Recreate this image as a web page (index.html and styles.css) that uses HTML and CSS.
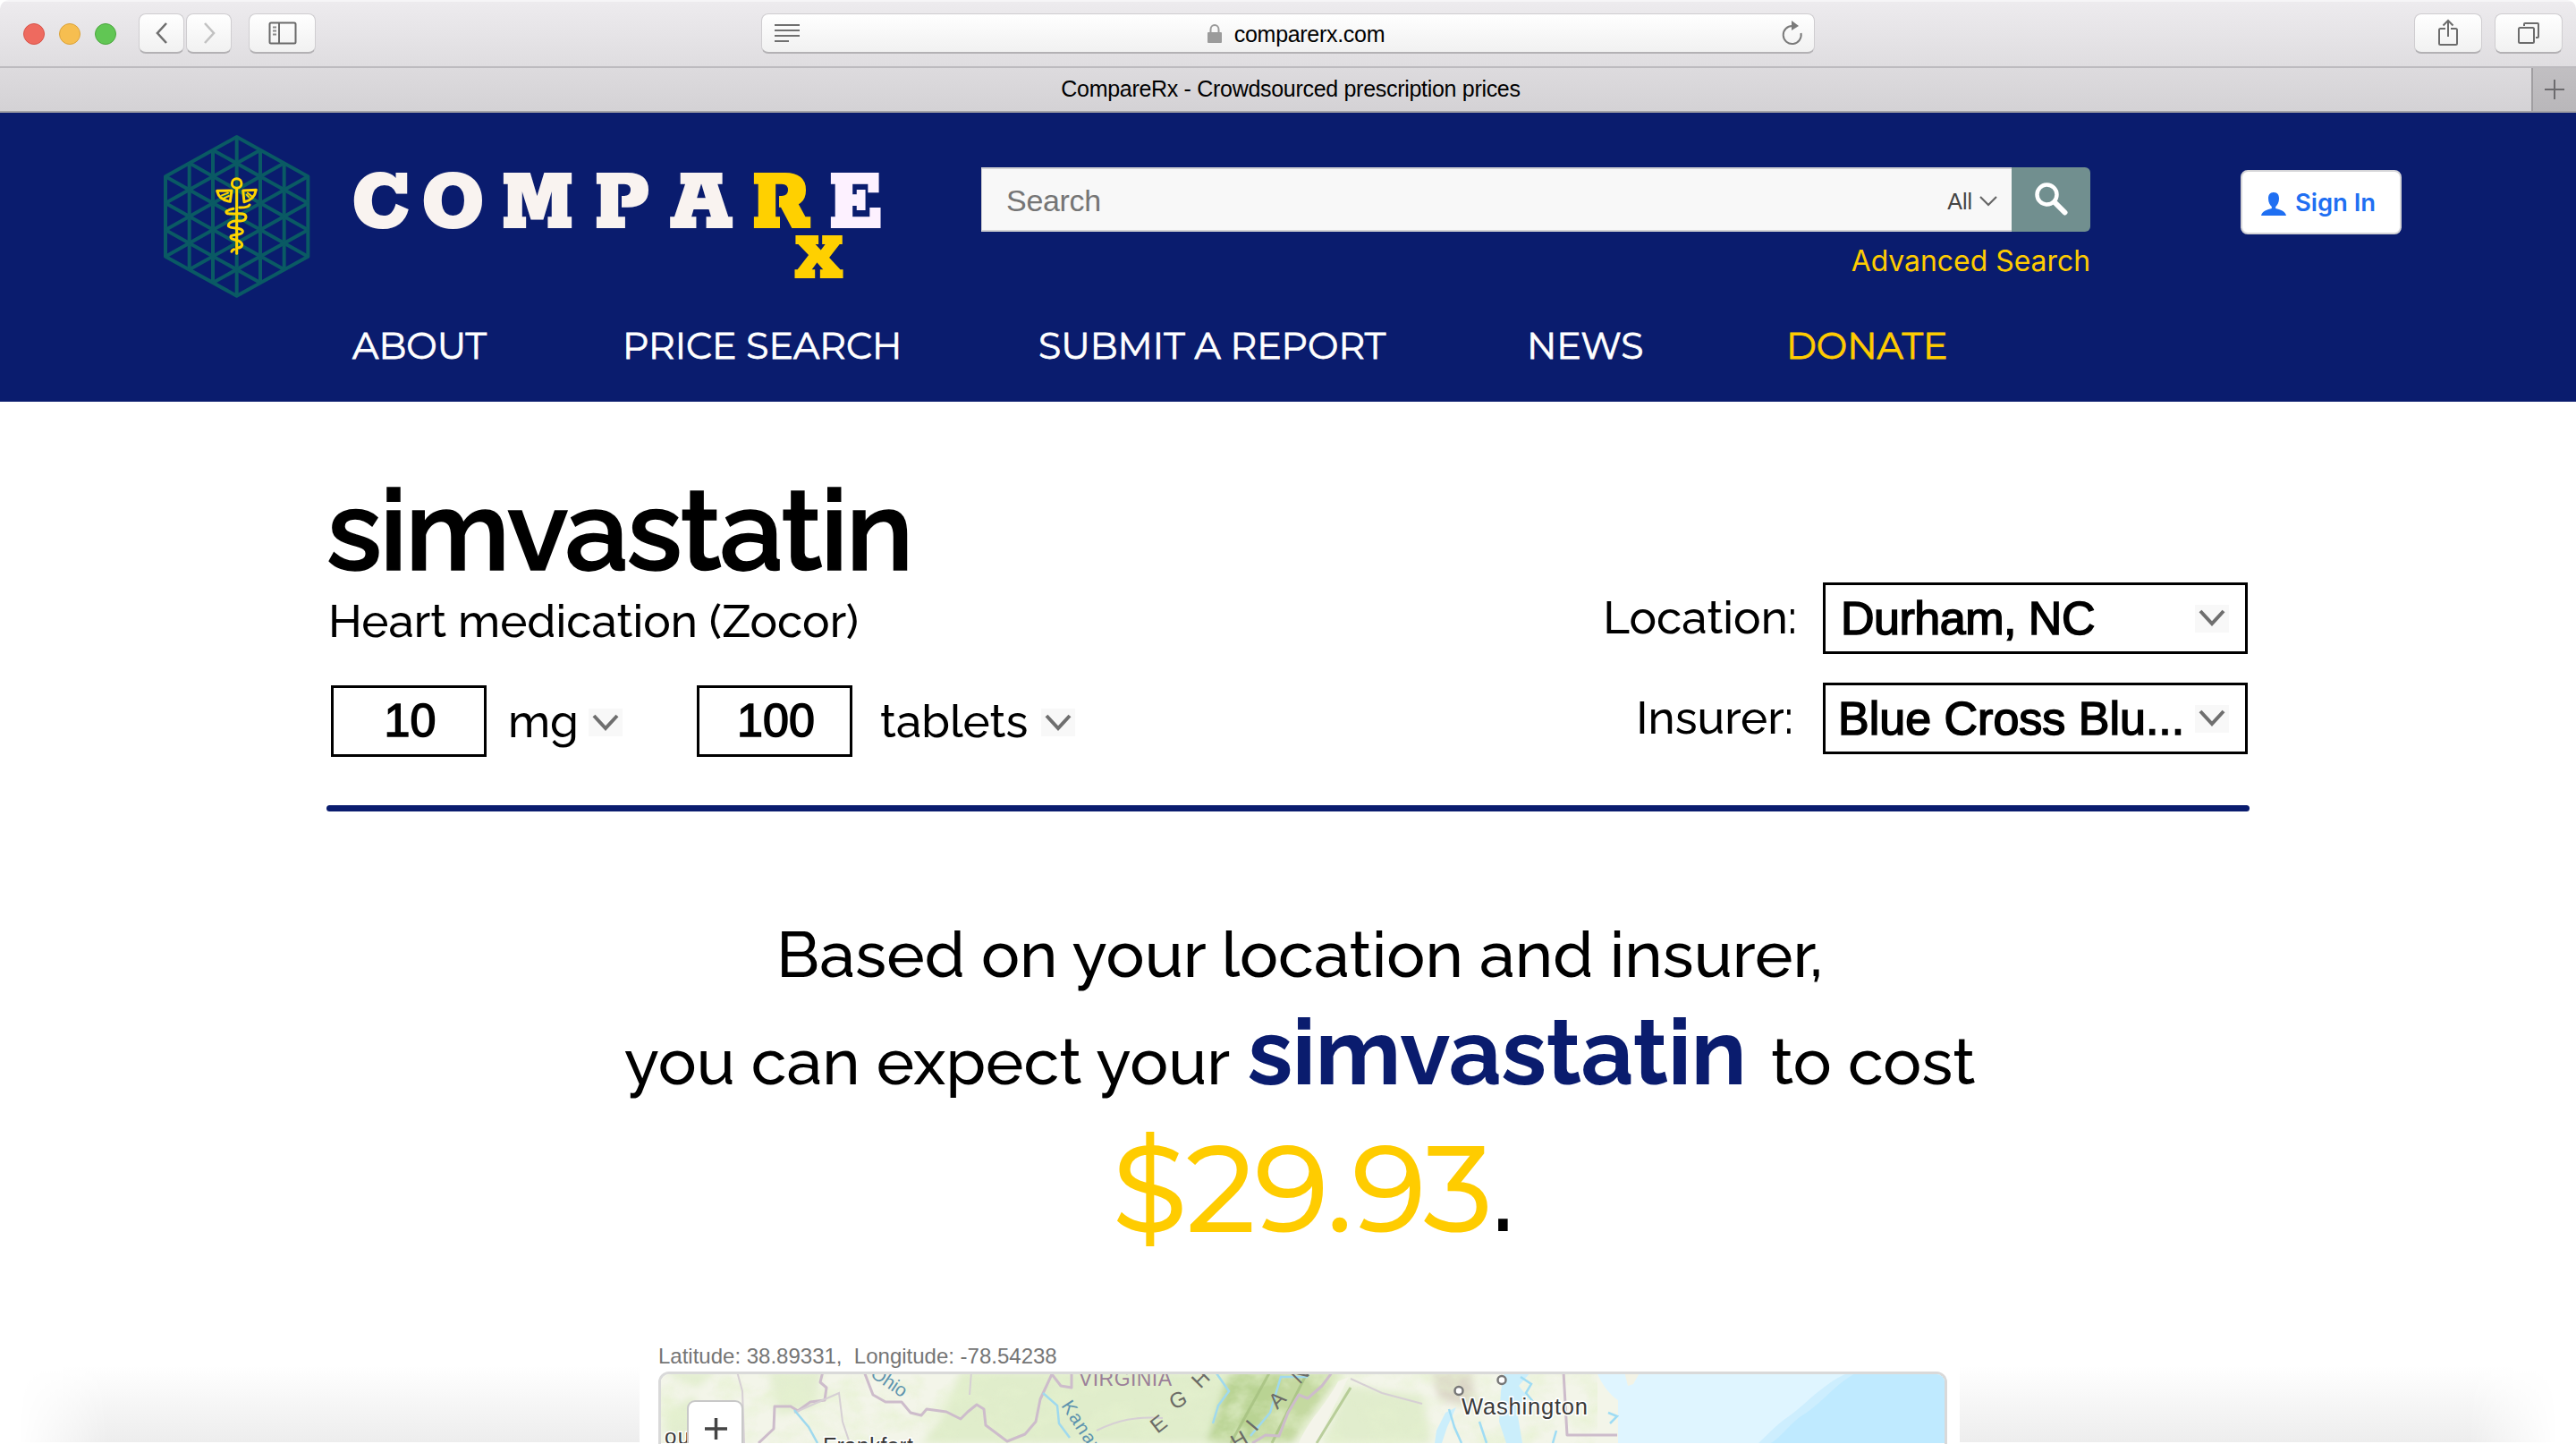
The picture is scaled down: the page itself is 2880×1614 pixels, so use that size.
FILE: index.html
```html
<!DOCTYPE html>
<html lang="en">
<head>
<meta charset="utf-8">
<title>CompareRx - Crowdsourced prescription prices</title>
<link rel="stylesheet" href="styles.css">
</head>
<body>
<div class="window">
  <div class="toolbar">
    <div class="lights"><i class="light red"></i><i class="light yellow"></i><i class="light green"></i></div>
    <div class="history">
      <button class="tool"><svg width="20" height="26" viewBox="0 0 20 26"><path d="M15 2L5 13L15 24" fill="none" stroke="#6f6f6f" stroke-width="2.6"/></svg></button>
      <button class="tool"><svg width="20" height="26" viewBox="0 0 20 26"><path d="M5 2L15 13L5 24" fill="none" stroke="#c2c2c2" stroke-width="2.6"/></svg></button>
    </div>
    <button class="tool sidebar"><svg width="32" height="26" viewBox="0 0 32 26"><g fill="none" stroke="#6a6a6a" stroke-width="2"><rect x="1.500" y="1.500" width="29" height="23" rx="1.500"/><path d="M12 1v24"/></g><path d="M5 6.500h4M5 10.500h4M5 14.500h4" stroke="#8a8a8a" stroke-width="2"/></svg></button>
    <div class="address">
      <svg width="30" height="22" viewBox="0 0 30 22"><path d="M0 2h28M0 8h28M0 14h28M0 20h16" stroke="#707070" stroke-width="2"/></svg>
      <div class="domain">
        <svg width="18" height="22" viewBox="0 0 18 22"><path d="M4.500 10V6a4.500 5 0 0 1 9 0v4" fill="none" stroke="#9b9b9b" stroke-width="2"/><rect x="1" y="9" width="16" height="12" rx="1" fill="#9b9b9b"/></svg>
        <span>comparerx.com</span>
      </div>
      <svg width="26" height="28" viewBox="0 0 26 28"><path d="M13 6A10 10 0 1 0 22.500 14" fill="none" stroke="#7a7a7a" stroke-width="2"/><path d="M12 0l8 6-8 5z" fill="#7a7a7a"/></svg>
    </div>
    <button class="tool wide share"><svg width="24" height="32" viewBox="0 0 24 32"><path d="M9 11H3.500Q2 11 2 12.500V27.500Q2 29 3.500 29H20.500Q22 29 22 27.500V12.500Q22 11 20.500 11H15M12 20V2M6.500 7.500L12 2L17.500 7.500" fill="none" stroke="#6c6c6c" stroke-width="2"/></svg></button>
    <button class="tool wide"><svg width="26" height="26" viewBox="0 0 26 26"><g fill="none" stroke="#6c6c6c" stroke-width="2"><rect x="2" y="7" width="17" height="17" rx="1.500"/><path d="M8 5V3Q8 2 9 2H23Q24 2 24 3V17Q24 18 23 18H21"/></g></svg></button>
  </div>
  <div class="tabbar">
    <div class="tab">CompareRx - Crowdsourced prescription prices</div>
    <div class="newtab"><svg width="22" height="22" viewBox="0 0 22 22"><path d="M11 0v22M0 11h22" stroke="#6c6b6e" stroke-width="2"/></svg></div>
  </div>

  <header class="header">
    <svg class="emblem" width="180" height="195" viewBox="0 0 540 585">
      <g fill="none" stroke="#0a5a64" stroke-width="12" stroke-linejoin="round">
        <path d="M269 24L508 157V425L269 557L30 425V157Z"/>
        <path d="M110 112V469M189 68V513M269 24V557M348 68V513M428 112V469"/>
        <path d="M30 336L348 513M30 246L428 469M30 157L508 425M110 112L508 336M189 68L508 246"/>
        <path d="M508 336L189 513M508 246L110 469M508 157L30 425M428 112L30 336M348 68L30 246"/>
      </g>
      <g fill="none" stroke="#ffd500" stroke-width="9" stroke-linecap="round" stroke-linejoin="round">
        <circle cx="269" cy="180" r="16"/>
        <path d="M269 198V415"/>
        <path d="M252 204L203 205Q210 236 247 241Z"/>
        <path d="M290 204L334 202Q328 236 294 242Z"/>
        <path d="M219 220L240 212M226 230L243 222M302 218L310 226M306 212L318 222" stroke-width="6"/>
        <path d="M278 261Q306 262 312 252M258 265Q226 272 236 280C252 288 298 272 300 292C300 312 270 304 269 305C250 304 238 318 242 324C252 334 290 326 289 342C286 356 262 348 250 356C244 368 264 368 278 374C294 384 286 396 272 396M252 409Q254 402 260 401"/>
      </g>
    </svg>
    <div class="masthead">
      <div class="top-row">
        <svg class="wordmark" width="702" height="130" viewBox="395 187 702 130">
          <g transform="matrix(1 0 0 1.1 0 -25.5)">
            <text class="brand" y="255" x="393 471 560 664 749">COMPA</text>
            <text class="brand gold" x="840" y="255">R</text>
            <text class="brand pale" x="926" y="255">E</text>
          </g>
          <text class="brand gold small" transform="matrix(1 0 0 1.08 0 -24.9)" x="888" y="311">X</text>
        </svg>
        <div class="search">
          <div class="search-box">
            <div class="search-field">
              <span class="placeholder">Search</span>
              <span class="scope">All</span>
              <svg width="20" height="12" viewBox="0 0 20 12"><path d="M1 1L10 10L19 1" fill="none" stroke="#666" stroke-width="2.200"/></svg>
            </div>
            <button class="search-btn"><svg width="38" height="38" viewBox="0 0 38 38"><circle cx="14.500" cy="13.500" r="11" fill="none" stroke="#fff" stroke-width="4.500"/><path d="M23 22L34.500 33.500" stroke="#fff" stroke-width="6" stroke-linecap="round"/></svg></button>
          </div>
          <a class="advanced">Advanced Search</a>
        </div>
        <button class="signin">
          <svg width="28" height="26" viewBox="0 0 28 26"><path d="M14 0C18.500 0 20 3 20 7C20 11 18 14.500 16.200 16V18C21 19 27 21 28 26H0C1 21 7 19 11.800 18V16C10 14.500 8 11 8 7C8 3 9.500 0 14 0Z" fill="#1f6ff2"/></svg>
          <span>Sign In</span>
        </button>
      </div>
      <nav class="nav"><a>ABOUT</a><a>PRICE SEARCH</a><a>SUBMIT A REPORT</a><a>NEWS</a><a class="donate">DONATE</a></nav>
    </div>
  </header>

  <section class="drug">
    <div class="details">
      <h1>simvastatin</h1>
      <p class="desc">Heart medication (Zocor)</p>
      <div class="dose">
        <span class="qty">10</span><span class="unit mg">mg</span><span class="caret"><svg viewBox="0 0 32 20"><path d="M3 2L16 16L29 2"/></svg></span>
        <span class="qty second">100</span><span class="unit tablets">tablets</span><span class="caret"><svg viewBox="0 0 32 20"><path d="M3 2L16 16L29 2"/></svg></span>
      </div>
    </div>
    <div class="filters">
      <label>Location:</label>
      <div class="select"><span>Durham, NC</span><span class="caret"><svg viewBox="0 0 32 20"><path d="M3 2L16 16L29 2"/></svg></span></div>
      <label class="insurer">Insurer:</label>
      <div class="select insurer-select"><span>Blue Cross Blu...</span><span class="caret"><svg viewBox="0 0 32 20"><path d="M3 2L16 16L29 2"/></svg></span></div>
    </div>
  </section>
  <div class="rule"></div>

  <section class="estimate">
    <p class="line first">Based on your location and insurer,</p>
    <p class="line second"><span>you can expect your</span><strong>simvastatin</strong><span>to cost</span></p>
    <p class="price">$29.93<span>.</span></p>
  </section>

  <section class="location">
    <div class="shade left"></div>
    <div class="map-panel">
      <p class="coords">Latitude: 38.89331,&nbsp; Longitude: -78.54238</p>
      <div class="map">
        <svg width="1441" height="80" viewBox="736 1534 1441 80">
          <defs>
            <filter id="soft" x="-20%" y="-40%" width="140%" height="180%"><feGaussianBlur stdDeviation="4"/></filter>
            <filter id="terrain" x="0" y="0" width="100%" height="100%"><feTurbulence type="fractalNoise" baseFrequency="0.030 0.040" numOctaves="4" seed="8"/><feColorMatrix values="0 0 0 0 .78  0 0 0 0 .88  0 0 0 0 .62  2.600 0 0 0 -1.050"/></filter>
          </defs>
          <rect x="736" y="1534" width="1441" height="80" fill="#f3f5e9"/>
          <g filter="url(#soft)">
            <path d="M1050 1590L1075 1534H1380V1614H1030Z" fill="#e0edcb"/>
            <path d="M1375 1534H1440L1400 1614H1350Z" fill="#b9d393"/>
            <path d="M1440 1534H1500L1445 1614H1400Z" fill="#c4d9a0"/>
            <path d="M1505 1550L1480 1614H1600L1590 1560Z" fill="#e1edcd"/>
            <path d="M1600 1534h45l5 40-40-8z" fill="#dcd6c8"/>
            <path d="M740 1534h60l-20 18zM745 1580l30-20 20 54h-50zM860 1534h60l-10 40-40 10z" fill="#e3eed0"/>
          </g>
          <rect x="736" y="1534" width="1050" height="80" filter="url(#terrain)" opacity=".6"/>
          <path d="M1376 1614L1420 1534M1422 1614L1462 1534M1472 1614L1510 1552" stroke="#a3bd7e" stroke-width="3" fill="none" opacity=".7"/>
          <path d="M1452 1614C1465 1585 1480 1575 1496 1545L1508 1540C1492 1570 1480 1600 1470 1614Z" fill="#f4f4ea"/>
          <g fill="none" stroke="#cdbccb" stroke-width="3" stroke-linejoin="round">
            <path d="M848 1614L865 1598L866 1573H884L892 1578L906 1568L922 1566L924 1552L917 1546L920 1534"/>
            <path d="M966 1534L976 1560L990 1568H1008L1018 1580L1030 1583L1036 1576L1058 1579L1074 1587L1082 1579L1092 1571L1100 1576L1102 1594L1126 1612L1146 1604L1158 1590L1163 1565L1176 1537L1186 1550L1198 1552V1534"/>
            <path d="M1400 1614L1415 1605L1430 1606L1440 1580L1452 1560L1462 1564L1478 1550L1490 1534"/>
            <path d="M1748 1534L1752 1605H1808"/>
          </g>
          <g fill="none" stroke="#d6cfd4" stroke-width="2">
            <path d="M824 1534L830 1556L832 1614M888 1580L938 1558L942 1590L950 1614M1226 1600C1250 1588 1270 1584 1300 1586M1086 1534L1084 1560M1510 1542L1545 1558L1590 1570M1608 1614L1616 1590"/>
          </g>
          <g fill="none" stroke="#9fd9ee" stroke-width="2.500">
            <path d="M888 1577L904 1596L914 1614M1166 1558L1182 1572L1184 1592L1196 1608M1360 1536L1374 1556L1362 1572L1356 1592M1462 1540H1432L1420 1580L1398 1606"/>
          </g>
          <path d="M1785 1534C1790 1548 1800 1560 1809 1566V1614H2177V1534Z" fill="#dff5ff"/>
          <path d="M2070 1534C2040 1545 2020 1570 2000 1584C1985 1594 1975 1606 1966 1614H2177V1534Z" fill="#cdeefe"/>
          <path d="M2078 1534C2050 1548 2038 1570 2012 1585C1998 1596 1992 1606 1980 1614H2177V1534Z" fill="#bfeaff"/>
          <path d="M1816 1534L1820 1550L1826 1548L1834 1534Z" fill="#f3f3e6"/>
          <path d="M1678 1556L1682 1534H1712L1698 1550L1706 1560L1696 1578L1702 1614H1684L1676 1590ZM1606 1600L1616 1580L1628 1574L1618 1596L1612 1614H1604Z" fill="#cbeefb"/>
          <path d="M1700 1540l12 8-6 10 10 12M1620 1576l6 20 8 18M1654 1590l8 24M1798 1580l10 4-8 8M1740 1600l-4 14" fill="none" stroke="#9fdcf4" stroke-width="2.500"/>
          <g class="map-text">
            <text x="1206" y="1549.500" font-size="23" fill="#9b8099" textLength="104">VIRGINIA</text>
            <g fill="#5d93ae">
              <text transform="translate(972 1539) rotate(34)" font-size="21" textLength="44">Ohio</text>
              <text transform="translate(1186 1572) rotate(57)" font-size="21" letter-spacing="1.500">Kanaw</text>
            </g>
            <g fill="#6b6b66" font-size="24">
              <text transform="translate(1294 1604) rotate(-38)">E</text>
              <text transform="translate(1312 1577) rotate(-25)">G</text>
              <text transform="translate(1342 1554) rotate(-45)">H</text>
              <text transform="translate(1382 1622) rotate(-30)">H</text>
              <text transform="translate(1404 1602) rotate(-50)">I</text>
              <text transform="translate(1428 1577) rotate(-45)">A</text>
              <text transform="translate(1453 1549) rotate(-45)">N</text>
            </g>
            <g fill="#3a3a3a" stroke="#fff" stroke-width="3" paint-order="stroke">
              <text x="743" y="1614.500" font-size="24" textLength="28">ou</text>
              <text x="920" y="1626" font-size="25" textLength="101">Frankfort</text>
              <text x="1634" y="1582" font-size="25.500" textLength="141">Washington</text>
            </g>
          </g>
          <g fill="#fff" stroke="#777" stroke-width="2.500"><circle cx="1631" cy="1555.500" r="4.500"/><circle cx="1679" cy="1543.500" r="4.500"/></g>
          <rect x="769" y="1567" width="61" height="60" rx="8" fill="#fff" stroke="#c8c8c8" stroke-width="2"/>
          <path d="M788 1598h25M800.500 1586v24" stroke="#444" stroke-width="3.500"/>
        </svg>
      </div>
    </div>
    <div class="shade right"></div>
  </section>
</div>
</body>
</html>
```
FILE: styles.css
```css
* { box-sizing: border-box; }
body { margin: 0; background: #fff; font-family: "Liberation Sans", sans-serif; color: #000; }
p, h1 { margin: 0; font-weight: 400; white-space: nowrap; }
button { font: inherit; padding: 0; }
svg { display: block; flex: none; }

.window { width: 2880px; height: 1614px; overflow: hidden; border-radius: 10px; display: flex; flex-direction: column; }

.toolbar { height: 76px; flex: none; display: flex; align-items: flex-start; padding: 13px 15px 0 26px; border-top: 2px solid #f6f5f7; border-bottom: 2px solid #bdbbbf; background: linear-gradient(#edebee, #dfdde0); }
.lights { display: flex; gap: 16px; padding-top: 11px; }
.light { width: 24px; height: 24px; border-radius: 50%; border: 1px solid; }
.red { background: #ee6a5f; border-color: #d8544a; }
.yellow { background: #f6be50; border-color: #dba33b; }
.green { background: #61c654; border-color: #4ca73f; }
.history { display: flex; gap: 2px; margin-left: 25px; }
.tool { width: 51px; height: 45px; display: flex; align-items: center; justify-content: center; border: 1px solid #cfcdd0; border-bottom: 2px solid #b3b1b4; border-radius: 8px; background: linear-gradient(#fff, #f1f1f1); }
.sidebar { width: 75px; margin-left: 19px; }
.wide { width: 76px; }
.share { margin-left: auto; margin-right: 14px; }
.address { width: 1178px; height: 45px; margin-left: 498px; padding: 0 11px 0 14px; display: flex; align-items: center; justify-content: space-between; border: 1px solid #cfcdd0; border-bottom: 2px solid #b3b1b4; border-radius: 8px; background: linear-gradient(#fff, #f1f1f1); }
.domain { display: flex; align-items: center; gap: 13px; margin-left: 10px; padding-top: 2px; font-size: 25px; letter-spacing: -0.3px; }

.tabbar { height: 50px; flex: none; display: flex; border-bottom: 2px solid #a3a2a5; background: linear-gradient(#dddbde, #d4d2d5); }
.tab { flex: 1; padding-left: 56px; text-align: center; line-height: 46px; font-size: 25px; letter-spacing: -0.3px; }
.newtab { width: 50px; display: flex; align-items: center; justify-content: center; border-left: 2px solid #a09ea1; background: linear-gradient(#c1bfc2, #b9b7ba); }

.header { height: 323px; flex: none; display: flex; gap: 40px; padding-left: 175px; background: #0a1c6e; color: #fff; }
.emblem { margin-top: 19px; }
.masthead { padding-top: 61px; }
.top-row { height: 174px; display: flex; align-items: flex-start; }
.wordmark { overflow: visible; }
.brand { font: 900 97px Rokkitt, "DejaVu Serif", serif; fill: #f9f3f0; }
.brand.gold { fill: #ffd000; }
.brand.pale { fill: #fdf1ff; }
.brand.small { font-size: 77px; }
.search { width: 1240px; display: flex; flex-direction: column; }
.search-box { display: flex; height: 72px; }
.search-field { flex: 1; display: flex; align-items: center; padding: 0 16px 0 27px; background: #f8f8f8; border: 1px solid #d2d2d4; border-width: 2px 0 2px 1px; color: #757575; }
.placeholder { font-size: 34px; letter-spacing: -0.3px; flex: 1; padding-top: 2px; }
.scope { font-size: 25px; color: #444; margin-right: 8px; padding-top: 5px; }
.search-field svg { margin-top: 4px; }
.search-btn { width: 88px; border: 0; border-radius: 0 6px 6px 0; background: #718f8f; display: flex; align-items: center; justify-content: center; }
.advanced { align-self: flex-end; margin-top: 13px; font: 400 31.9px/40px Inter, sans-serif; color: #ffcc00; }
.signin { width: 180px; height: 72px; margin: 3px 0 0 168px; display: flex; align-items: center; gap: 10px; padding-left: 21px; border: 2px solid #d5d5d8; border-radius: 8px; background: #fff; color: #1f6ff2; font: 600 27.400px Inter, sans-serif; }
.signin svg { margin-top: 4px; }
.nav { display: grid; grid-template-columns: 302px 465px 546px 290px auto; margin-left: -1px; font: 400 41px/50px Montserrat, "Open Sans", sans-serif; white-space: nowrap; -webkit-text-stroke: 0.8px; }
.donate { color: #ffcc00; }

.drug { flex: none; width: 2151px; margin-left: 365px; display: flex; justify-content: space-between; }
.details { padding-top: 79px; font-family: Raleway, Lato, sans-serif; font-weight: 500; }
h1 { font-size: 126px; line-height: 130px; font-weight: 600; letter-spacing: -2px; -webkit-text-stroke: 1.600px #000; }
.desc { margin: 6px 0 0 2px; font-size: 51px; line-height: 60px; font-weight: 500; }
.dose { margin-top: 42px; margin-left: 5px; height: 80px; display: flex; align-items: center; }
.qty { width: 174px; height: 80px; border: 3px solid #000; text-align: center; font: 52px/73px "Liberation Sans", sans-serif; -webkit-text-stroke: 1.600px #000; padding-left: 3px; }
.second { margin-left: 83px; }
.unit { font-size: 51px; line-height: 80px; }
.mg { margin-left: 24px; width: 90px; }
.tablets { margin-left: 31px; width: 180px; }
.caret { width: 38px; height: 31px; background: #f8f8f8; display: flex; align-items: center; justify-content: center; }
.caret svg { width: 32px; height: 20px; fill: none; stroke: #6f6f6f; stroke-width: 4px; }
.dose .caret { margin-top: 3px; }
.filters { margin-top: 202px; margin-right: 3px; display: grid; grid-template-columns: auto 475px; grid-auto-rows: 80px; row-gap: 32px; text-align: right; font: 500 51px/79px Raleway, Lato, sans-serif; }
.filters label { padding-right: 29px; }
.filters .insurer { padding-right: 33px; }
.select { display: flex; align-items: center; justify-content: space-between; padding: 0 18px 0 17px; border: 3px solid #000; font: 52px/74px "Liberation Sans", sans-serif; letter-spacing: -0.5px; -webkit-text-stroke: 1.600px #000; }
.insurer-select { padding-left: 14px; letter-spacing: 0; }
.rule { flex: none; width: 2150px; height: 7px; margin: 54px 0 0 365px; border-radius: 4px; background: #0a1c6e; }

.estimate { flex: none; padding-top: 100px; font-family: Raleway, Lato, sans-serif; font-weight: 500; }
.line { height: 120px; line-height: 120px; font-size: 71.900px; font-weight: 500; }
.first { padding-left: 868px; }
.second.line { padding-left: 698px; margin: 0; display: flex; align-items: baseline; font-size: 71.700px; }
.line strong { margin: 0 28px 0 19px; font-size: 103px; line-height: 97px; font-weight: 700; color: #0a1c6e; letter-spacing: -0.5px; }
.price { margin-top: 11px; padding-left: 1244px; font: 400 134.500px/140px Montserrat, Lato, sans-serif; color: #ffcc00; -webkit-text-stroke: 2.200px; }
.price span { margin-left: 1px; font: 700 96px/100px Raleway, Lato, sans-serif; color: #000; -webkit-text-stroke: 0; }

.location { flex: none; display: flex; height: 114px; margin-top: 100px; }
.shade { width: 715px; background: linear-gradient(#fff 25%, #ededed); }
.shade.left { -webkit-mask-image: linear-gradient(90deg, transparent 20px, #000 120px); mask-image: linear-gradient(90deg, transparent 20px, #000 120px); }
.shade.right { width: 689px; -webkit-mask-image: linear-gradient(270deg, transparent 20px, #000 120px); mask-image: linear-gradient(270deg, transparent 20px, #000 120px); }
.map-panel { width: 1476px; padding: 3px 14px 0 21px; }
.coords { font-size: 24px; line-height: 30px; color: #757575; }
.map { margin-top: 2px; width: 1441px; height: 100px; overflow: hidden; border: 3px solid #d9d9d9; border-radius: 12px; }
.map svg { margin: -3px 0 0 -3px; }
.map-text { font-family: "Liberation Sans", sans-serif; }
```
